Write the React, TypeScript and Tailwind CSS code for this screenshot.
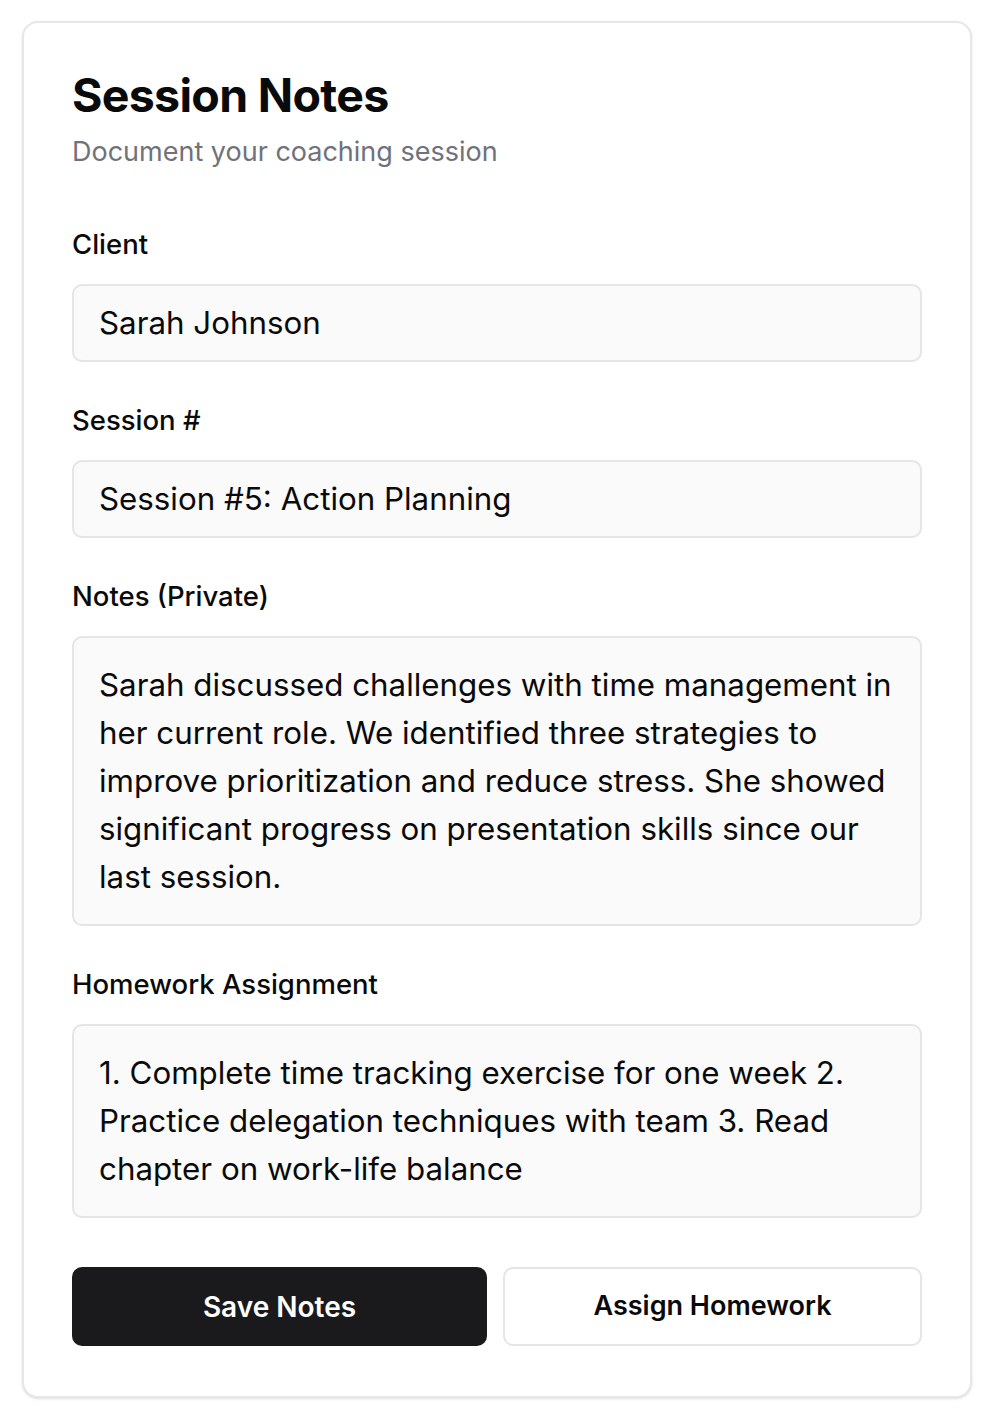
import React from "react";

export default function App() {
  return (
    <div className="min-h-[1418px] bg-white pt-[21px] pl-[22px]" style={{ fontFamily: "Inter, 'Noto Sans', sans-serif" }}>
      <div className="w-[950px] rounded-[16px] border-2 border-[#e7e7e7] bg-white px-[48px] pt-[45px] pb-[50px] text-[#0a0a0a] shadow-sm">
        <h1 className="text-[46.5px] font-bold leading-[54px] tracking-[-0.015em]">Session Notes</h1>
        <p className="mt-[13px] text-[27px] leading-[34px] text-[#71717a]">Document your coaching session</p>

        <div className="mt-[59px] flex flex-col">
          <label className="text-[27.5px] font-medium leading-[32px]">Client</label>
          <div className="mt-[24px] flex h-[78px] items-center rounded-[10px] border-2 border-[#e5e5e5] bg-[#fafafa] px-[25px] text-[31.3px]">
            Sarah Johnson
          </div>

          <label className="mt-[42px] text-[27.5px] font-medium leading-[32px]">Session #</label>
          <div className="mt-[24px] flex h-[78px] items-center rounded-[10px] border-2 border-[#e5e5e5] bg-[#fafafa] px-[25px] text-[31.3px]">
            Session #5: Action Planning
          </div>

          <label className="mt-[42px] text-[27.5px] font-medium leading-[32px]">Notes (Private)</label>
          <div className="mt-[24px] h-[290px] rounded-[10px] border-2 border-[#e5e5e5] bg-[#fafafa] px-[25px] py-[23px] text-[31.3px] leading-[48px]">
            Sarah discussed challenges with time management in her current role. We identified three strategies to improve prioritization and reduce stress. She showed significant progress on presentation skills since our last session.
          </div>

          <label className="mt-[42px] text-[27.5px] font-medium leading-[32px]">Homework Assignment</label>
          <div className="mt-[24px] h-[194px] rounded-[10px] border-2 border-[#e5e5e5] bg-[#fafafa] px-[25px] py-[23px] text-[31.3px] leading-[48px]">
            1. Complete time tracking exercise for one week 2. Practice delegation techniques with team 3. Read chapter on work-life balance
          </div>

          <div className="mt-[49px] flex gap-[16px]">
            <button className="flex h-[79px] w-[415px] items-center justify-center rounded-[10px] bg-[#1a1a1c] text-[28px] font-semibold text-white">
              Save Notes
            </button>
            <button className="flex h-[79px] flex-1 items-center justify-center rounded-[10px] border-2 border-[#e5e5e5] bg-white text-[27px] font-semibold text-[#0a0a0a]">
              Assign Homework
            </button>
          </div>
        </div>
      </div>
    </div>
  );
}
